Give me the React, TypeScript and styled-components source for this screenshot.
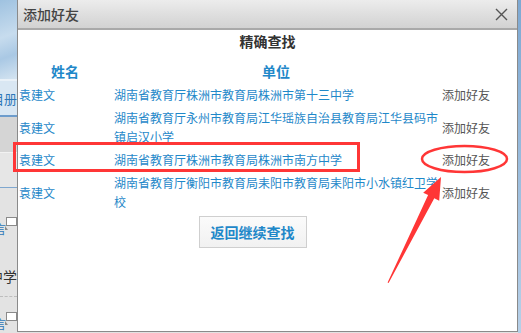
import styled, { createGlobalStyle } from "styled-components";

const GlobalStyle = createGlobalStyle`
  html, body {
    margin: 0;
    padding: 0;
    overflow: hidden;
  }
  body {
    font-family: "Noto Sans CJK SC", "Noto Sans", sans-serif;
  }
`;

type Friend = {
  name: string;
  unit: string;
};

const friends: Friend[] = [
  { name: "袁建文", unit: "湖南省教育厅株洲市教育局株洲市第十三中学" },
  { name: "袁建文", unit: "湖南省教育厅永州市教育局江华瑶族自治县教育局江华县码市镇启汉小学" },
  { name: "袁建文", unit: "湖南省教育厅株洲市教育局株洲市南方中学" },
  { name: "袁建文", unit: "湖南省教育厅衡阳市教育局耒阳市教育局耒阳市小水镇红卫学校" },
];

function App() {
  return (
    <Page>
      <GlobalStyle />
      <SideStrip>
        <SkyBanner />
        <MenuTab>目册</MenuTab>
        <GrayBand />
        <LightBand />
        <BubbleRow top={20}>
          <BubbleText>言</BubbleText>
          <Bubble />
        </BubbleRow>
        <SchoolText>中学</SchoolText>
        <DashLine />
        <BubbleRow top={6}>
          <BubbleText>言</BubbleText>
          <Bubble />
        </BubbleRow>
      </SideStrip>
      <Dialog>
        <DialogHeader>
          <DialogTitle>添加好友</DialogTitle>
          <CloseButton>
            <svg width="13" height="13" viewBox="0 0 13 13">
              <path d="M1 1 L12 12 M12 1 L1 12" stroke="#555" strokeWidth="1.4" fill="none" />
            </svg>
          </CloseButton>
        </DialogHeader>
        <DialogBody>
          <SearchTitle>精确查找</SearchTitle>
          <ResultTable>
            <colgroup>
              <col style={{ width: 94 }} />
              <col style={{ width: 328 }} />
              <col />
            </colgroup>
            <thead>
              <tr>
                <HeadCell>姓名</HeadCell>
                <HeadCell>单位</HeadCell>
                <HeadCell />
              </tr>
            </thead>
            <tbody>
              {friends.map((f, i) => (
                <tr key={i}>
                  <NameCell>{f.name}</NameCell>
                  <UnitCell>{f.unit}</UnitCell>
                  <ActionCell>添加好友</ActionCell>
                </tr>
              ))}
            </tbody>
          </ResultTable>
          <ButtonRow>
            <BackButton>返回继续查找</BackButton>
          </ButtonRow>
        </DialogBody>
      </Dialog>
      <EdgeStrip />
      <Annotations width="521" height="333" viewBox="0 0 521 333">
        <rect x="14.5" y="143.5" width="344" height="27" fill="none" stroke="#ff3636" strokeWidth="3" />
        <ellipse cx="464.5" cy="159" rx="42.5" ry="13" fill="none" stroke="#ff3636" strokeWidth="2.5" />
        <polygon
          points="441,177 439.2,200.7 434.3,198.3 388.6,283 387.6,282.6 428.1,195.1 423.2,192.7"
          fill="#ff3636"
        />
      </Annotations>
    </Page>
  );
}

const Page = styled.div`
  position: relative;
  display: flex;
  width: 521px;
  height: 333px;
  background: #e2e2e2;
  overflow: hidden;
`;

const SideStrip = styled.div`
  width: 17px;
  display: flex;
  flex-direction: column;
  overflow: hidden;
  background: #e3e3e3;
`;

const SkyBanner = styled.div`
  flex-shrink: 0;
  height: 79px;
  border-bottom: 2px solid #e9f1f8;
  background: linear-gradient(160deg, #9fc2e0 0%, #c7dcee 45%, #a9c8e4 70%, #d4e4f1 100%);
`;

const MenuTab = styled.div`
  flex-shrink: 0;
  height: 34px;
  display: flex;
  align-items: center;
  justify-content: flex-end;
  font-size: 13px;
  color: #2f78b8;
  white-space: nowrap;
  background: #d9e7f3;
  border-bottom: 2px solid #6d9ccc;
`;

const GrayBand = styled.div`
  flex-shrink: 0;
  height: 35px;
  background: #d5d5d5;
  border-bottom: 1px solid #f2f2f2;
`;

const LightBand = styled.div`
  flex-shrink: 0;
  height: 34px;
  background: #e6e6e6;
  border-bottom: 1px solid #7fa7cf;
`;

const BubbleRow = styled.div<{ top: number }>`
  flex-shrink: 0;
  height: 32px;
  display: flex;
  align-items: center;
  justify-content: flex-end;
  margin-top: ${(props) => props.top}px;
`;

const BubbleText = styled.span`
  flex-shrink: 0;
  font-size: 12px;
  color: #2f78b8;
  margin-top: 8px;
`;

const Bubble = styled.div`
  flex-shrink: 0;
  position: relative;
  width: 9px;
  height: 7px;
  border: 1.5px solid #8a8a8a;
  background: #fff;
  margin-bottom: 6px;
  &::after {
    content: "";
    position: absolute;
    left: -2px;
    bottom: -5px;
    border-left: 3px solid #8a8a8a;
    border-top: 4px solid transparent;
  }
`;

const SchoolText = styled.div`
  flex-shrink: 0;
  height: 20px;
  line-height: 20px;
  margin-top: 26px;
  font-size: 14px;
  color: #333;
  white-space: nowrap;
  display: flex;
  justify-content: flex-end;
`;

const DashLine = styled.div`
  flex-shrink: 0;
  margin-top: 10px;
  height: 0;
  border-top: 1px dashed #bdbdbd;
`;

const Dialog = styled.div`
  width: 499px;
  height: 331px;
  border: 1px solid #8a8a8a;
  border-top: none;
  background: #fff;
  display: flex;
  flex-direction: column;
`;

const DialogHeader = styled.div`
  height: 28px;
  display: flex;
  align-items: center;
  justify-content: space-between;
  padding: 0 9px 0 5px;
  background: linear-gradient(#ececec, #d2d2d2);
  border-bottom: 2px solid #a9a9a9;
`;

const DialogTitle = styled.span`
  font-size: 14px;
  font-weight: 500;
  color: #444;
`;

const CloseButton = styled.span`
  display: flex;
  align-items: center;
`;

const DialogBody = styled.div`
  display: flex;
  flex-direction: column;
`;

const SearchTitle = styled.div`
  height: 30px;
  line-height: 22px;
  font-size: 14px;
  font-weight: bold;
  color: #333;
  text-align: center;
`;

const ResultTable = styled.table`
  width: 100%;
  border-collapse: collapse;
  table-layout: fixed;
  font-size: 12px;
  line-height: 19px;
`;

const HeadCell = styled.th`
  padding: 2px;
  font-size: 14px;
  font-weight: bold;
  color: #1f88c9;
  text-align: center;
`;

const NameCell = styled.td`
  padding: 2px 2px 2px 1px;
  color: #1f88c9;
  vertical-align: middle;
`;

const UnitCell = styled.td`
  padding: 2px;
  color: #1f88c9;
`;

const ActionCell = styled.td`
  padding: 2px;
  color: #555;
  vertical-align: middle;
`;

const ButtonRow = styled.div`
  display: flex;
  justify-content: center;
  padding-right: 30px;
  margin-top: 3px;
`;

const BackButton = styled.button`
  width: 108px;
  height: 32px;
  border: 1px solid #cfcfcf;
  background: linear-gradient(#fbfbfb, #f1f1f1);
  font-family: inherit;
  font-size: 14px;
  font-weight: bold;
  color: #1f88c9;
  padding: 0;
`;

const EdgeStrip = styled.div`
  flex: 1;
  background: linear-gradient(#7ea9d3, #b7d0e8);
`;

const Annotations = styled.svg`
  position: absolute;
  left: 0;
  top: 0;
  pointer-events: none;
`;

export default App;
